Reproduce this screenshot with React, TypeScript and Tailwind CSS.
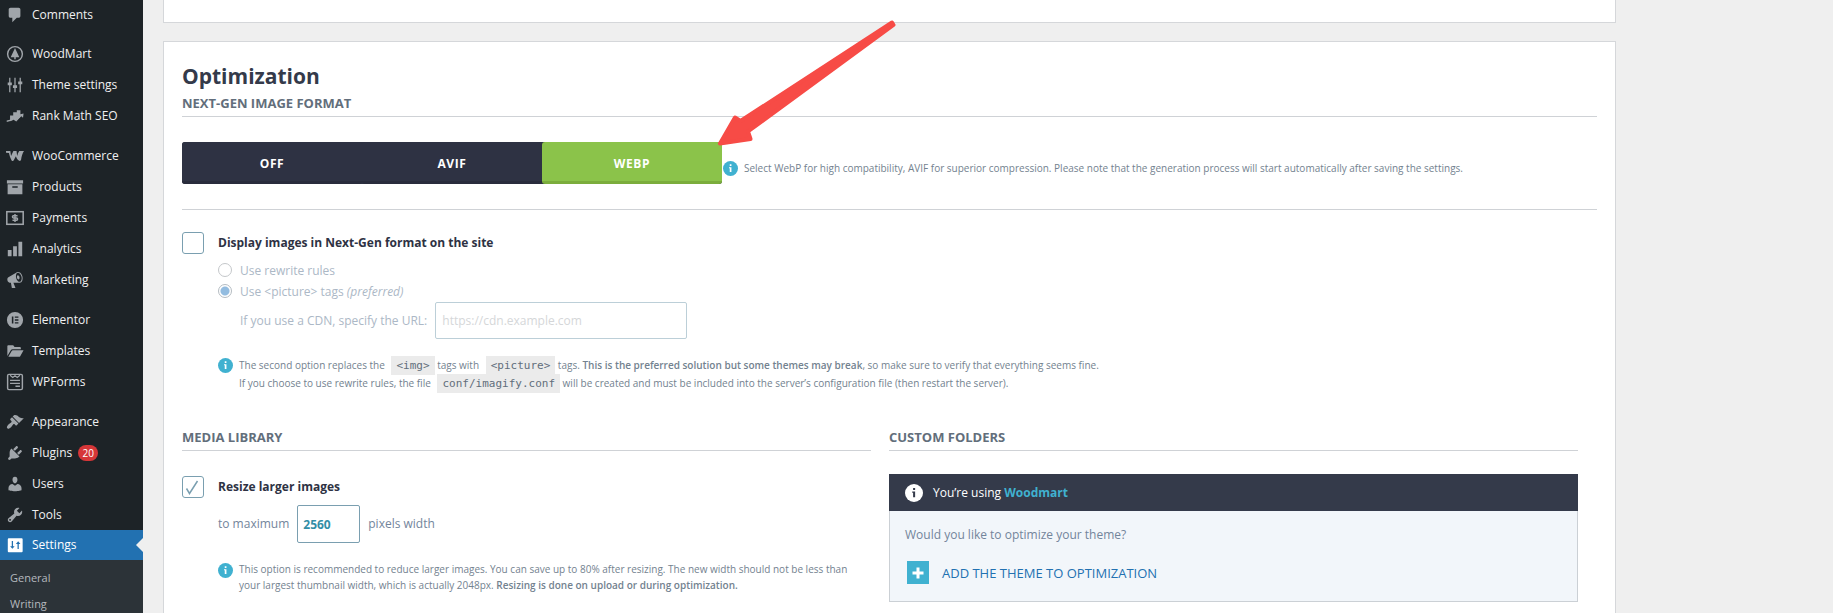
import type { ReactNode } from "react";
import clsx from "clsx";

const icons: Record<string, ReactNode> = {
  comments: <path d="M5 2h9c1.1 0 2 .9 2 2v7c0 1.1-.9 2-2 2h-2l-5 5v-5H5c-1.1 0-2-.9-2-2V4c0-1.1.9-2 2-2z" />,
  woodmart: (
    <>
      <circle cx="10" cy="10" r="8.2" fill="none" stroke="currentColor" strokeWidth="1.6" />
      <path d="M10 3.2l4.8 10.3h-4v2.3H9.2v-2.3h-4z" />
    </>
  ),
  theme: (
    <path d="M3.5 2h1.4v5.2h1.6v3H4.9V18H3.5v-7.800H1.900v-3h1.600zM9.300 2h1.400v8.200h1.600v3h-1.600V18H9.300v-4.800H7.700v-3h1.600zM15.100 2h1.400v4.200h1.600v3h-1.600V18h-1.400V9.200h-1.600v-3h1.600z" />
  ),
  rankmath: (
    <>
      <path d="M4.500 9.500h3.500v5l-3.500 1.300zM8 5.800h4v8.200l-1 .7-3-1.200zM12 3.500h4v7.500l-4 3.500z" />
      <path d="M.8 15.800c2.800-.2 5-1 7.200-2.700l3.300 2.100 6-6.500" fill="none" stroke="currentColor" strokeWidth="1.500" />
      <path d="M14.800 8.200l4.700-1-.6 4.800z" />
    </>
  ),
  woo: (
    <path d="M0 4.500h4.800L5.600 10l2.600-5.500h3.500l.7 5.400c.5-2 1.200-3.800 2.300-5.400H20c-1.700 2.600-2.800 5.800-3.200 9.500-.2 1.500-1.500 2-2.600 1.100-1.500-1.300-2.600-3-3.200-4.900-.9 1.500-1.600 3-2.200 4.300-.7 1.300-1.900 1.500-2.700.1C4.600 12 3.800 9.500 3.300 6.800L0 6.500z" />
  ),
  products: (
    <path fillRule="evenodd" d="M1 2.500h18V6H1zM1.800 7h16.400v11H1.800zM7 9.200v1.600h6V9.200z" />
  ),
  payments: (
    <>
      <rect x=".9" y="3" width="18.200" height="14" fill="none" stroke="currentColor" strokeWidth="1.700" />
      <path d="M12.800 7.500H8.200c-1.400 0-1.400 2.400 0 2.400h3.600c1.400 0 1.400 2.600 0 2.600H7.200M10 5.500v9" fill="none" stroke="currentColor" strokeWidth="1.600" />
    </>
  ),
  analytics: <path d="M2 11h4.200v7H2zM7.900 7h4.200v11H7.900zM13.800 2H18v16h-4.200z" />,
  marketing: (
    <path d="M18.150 5.940c.46 1.620.38 3.220-.02 4.480-.42 1.280-1.260 2.180-2.300 2.480-.16.06-.26.06-.4.06-.06.02-.12.02-.18.02-.06.02-.14.02-.22.02h-6.800l2.220 5.500c.02.14-.06.26-.14.34-.08.1-.24.16-.34.16H6.950c-.1 0-.26-.06-.34-.16-.08-.08-.16-.2-.14-.34l-1-5.500H4.250l-.02-.02c-.5.06-1.080-.18-1.540-.62s-.88-1.080-1.060-1.880c-.24-.8-.2-1.560-.02-2.200.18-.62.58-1.080 1.060-1.300l.02-.02 9-5.400c.1-.06.18-.1.24-.16.06-.04.14-.08.24-.12.16-.08.28-.12.5-.18 1.040-.3 2.240.1 3.220.98s1.840 2.240 2.260 3.860zm-2.580 5.980h-.02c.4-.1.74-.34 1.040-.7.58-.7.86-1.760.86-3.040 0-.64-.1-1.300-.28-1.980-.34-1.360-1.020-2.500-1.780-3.240s-1.680-1.100-2.460-.88c-.82.22-1.400.96-1.700 2-.32 1.040-.28 2.360.06 3.720.38 1.360 1 2.500 1.800 3.240.78.74 1.620 1.100 2.480.88zm-2.540-7.080c.22-.04.42-.02.62.04.38.16.76.48 1.020 1s.42 1.200.42 1.780c0 .3-.04.56-.12.8-.18.48-.44.84-.86.94-.34.1-.8-.06-1.140-.4s-.64-.86-.78-1.500c-.18-.62-.12-1.240.02-1.720s.48-.84.82-.94z" />
  ),
  elementor: (
    <path fillRule="evenodd" d="M10 1a9 9 0 100 18 9 9 0 000-18zM6.500 6h1.700v8H6.500zM9.800 6h4v1.600h-4zM9.800 9.200h4v1.600h-4zM9.800 12.400h4V14h-4z" />
  ),
  templates: (
    <path d="M1.500 15.500V4.500c0-.6.4-1 1-1H8l1.500 2h6c.6 0 1 .4 1 1V8H7.300c-.9 0-1.600.4-2 1.200zM2.600 16.500L6.300 10c.3-.6.7-.9 1.300-.9h11.900l-3.700 6.600c-.3.5-.7.8-1.300.8z" />
  ),
  wpforms: (
    <>
      <rect x="1.800" y="1.500" width="16.400" height="17" rx="1.500" fill="none" stroke="currentColor" strokeWidth="1.600" />
      <path d="M4.500 2.500l3 2.500L10 3l2.500 2 3-2.500" fill="none" stroke="currentColor" strokeWidth="1.300" />
      <path d="M4.500 7.500h11V9h-11zM4.500 10.700h11v1.500h-11zM10.500 14h5v1.600h-5z" />
    </>
  ),
  appearance: (
    <path d="M14.480 11.060L7.410 3.990l1.500-1.500c.5-.56 2.300-.47 3.510.32 1.210.8 1.430 1.280 2.910 2.100 1.180.64 2.450 1.260 4.450.85zm-.71.71L6.700 4.700 4.930 6.470c-.39.39-.39 1.020 0 1.410l1.060 1.060c.39.39.39 1.030 0 1.420-.6.6-1.430 1.110-2.210 1.690-.35.26-.7.53-1.010.84C1.430 14.230.4 16.080 1.400 17.070c.99 1 2.840-.03 4.180-1.360.31-.31.58-.66.85-1.020.57-.78 1.080-1.610 1.690-2.210.39-.39 1.020-.39 1.410 0l1.060 1.060c.39.39 1.020.39 1.410 0z" />
  ),
  plugins: (
    <path d="M13.110 4.360L9.870 7.600 8 5.730l3.240-3.240c.35-.34 1.050-.2 1.560.32.52.51.66 1.210.31 1.550zm-8 1.770l.91-1.120 9.010 9.010-1.190.84c-.71.71-2.630 1.160-3.820 1.160H6.140L4.900 17.260c-.59.59-1.540.59-2.120 0-.59-.58-.59-1.530 0-2.120l1.240-1.240v-3.880c0-1.130.4-3.190 1.090-3.890zm7.260 3.970l3.240-3.240c.34-.35 1.040-.21 1.550.31.52.51.66 1.210.31 1.550l-3.240 3.250z" />
  ),
  users: (
    <path d="M10 9.250c-2.270 0-2.730-3.440-2.730-3.440C7 4.020 7.820 2 9.970 2c2.160 0 2.980 2.020 2.710 3.810 0 0-.41 3.440-2.680 3.440zm0 2.570L12.720 10c2.390 0 4.520 2.330 4.520 4.530v2.490s-3.650 1.130-7.240 1.130c-3.650 0-7.240-1.130-7.240-1.130v-2.490c0-2.250 1.940-4.480 4.470-4.480z" />
  ),
  tools: (
    <path d="M16.680 9.770c-1.340 1.340-3.300 1.670-4.950.99l-5.410 6.520c-.99.99-2.590.99-3.580 0s-.99-2.590 0-3.570l6.520-5.420c-.68-1.650-.35-3.610.99-4.950 1.280-1.280 3.120-1.620 4.720-1.060l-2.890 2.890 2.820 2.820 2.860-2.870c.53 1.580.18 3.390-1.080 4.650zM3.810 16.210c.4.39 1.040.39 1.430 0 .4-.4.4-1.040 0-1.430-.39-.4-1.030-.4-1.430 0-.39.39-.39 1.030 0 1.430z" />
  ),
  settings: (
    <path fillRule="evenodd" d="M3 2.500h14.500c.6 0 1 .4 1 1v13.500c0 .6-.4 1-1 1H3c-.6 0-1-.4-1-1V3.500c0-.6.4-1 1-1zM6.400 5.500v5.800H4.600l2.500 3 2.500-3H7.800V5.500zM12.800 14.500V8.800H11l2.500-3 2.500 3h-1.800v5.700z" />
  ),
};

type MenuItem = { label: string; icon: string; badge?: string };

const menuGroups: MenuItem[][] = [
  [
    { label: "WoodMart", icon: "woodmart" },
    { label: "Theme settings", icon: "theme" },
    { label: "Rank Math SEO", icon: "rankmath" },
  ],
  [
    { label: "WooCommerce", icon: "woo" },
    { label: "Products", icon: "products" },
    { label: "Payments", icon: "payments" },
    { label: "Analytics", icon: "analytics" },
    { label: "Marketing", icon: "marketing" },
  ],
  [
    { label: "Elementor", icon: "elementor" },
    { label: "Templates", icon: "templates" },
    { label: "WPForms", icon: "wpforms" },
  ],
  [
    { label: "Appearance", icon: "appearance" },
    { label: "Plugins", icon: "plugins", badge: "20" },
    { label: "Users", icon: "users" },
    { label: "Tools", icon: "tools" },
  ],
];

const MenuIcon = ({ name }: { name: string }) => (
  <svg viewBox="0 0 20 20" className="h-[18px] w-[18px] shrink-0" fill="currentColor" aria-hidden="true">
    {icons[name]}
  </svg>
);

const MenuLink = ({ item }: { item: MenuItem }) => (
  <a href="#" className="flex h-[31px] items-center gap-2 pl-1.5 text-[#a0a5aa]">
    <MenuIcon name={item.icon} />
    <span className="text-[#f0f0f1]">{item.label}</span>
    {item.badge && (
      <span className="-ml-0.5 flex h-4 w-5 items-center justify-center rounded-full bg-[#d63638] text-[10px] text-white">
        {item.badge}
      </span>
    )}
  </a>
);

const Sidebar = () => (
  <nav className="flex w-[143px] shrink-0 flex-col gap-[9px] bg-[#1d2327] text-xs leading-5">
    <a href="#" className="flex h-[29px] shrink-0 items-center gap-2 pl-1.5 text-[#a0a5aa]">
      <MenuIcon name="comments" />
      <span className="text-[#f0f0f1]">Comments</span>
    </a>
    {menuGroups.map((group, index) => (
      <div key={index}>
        {group.map((item) => (
          <MenuLink key={item.label} item={item} />
        ))}
        {index === menuGroups.length - 1 && (
          <>
            <a href="#" className="relative flex h-[30px] items-center gap-2 bg-[#2271b1] pl-1.5 text-white">
              <MenuIcon name="settings" />
              <span>Settings</span>
              <svg viewBox="0 0 7 14" className="absolute right-0 h-3.5 w-[7px]" aria-hidden="true">
                <path d="M7 0v14L0 7z" fill="#efefef" />
              </svg>
            </a>
            <div className="bg-[#2c3338] pt-[5px] text-[11px] text-[#b4b9be]">
              <a href="#" className="flex h-[26px] items-center pl-2.5">General</a>
              <a href="#" className="flex h-[26px] items-center pl-2.5">Writing</a>
            </div>
          </>
        )}
      </div>
    ))}
  </nav>
);

const InfoIcon = ({ className }: { className?: string }) => (
  <svg viewBox="0 0 16 16" className={clsx("shrink-0", className)} aria-hidden="true">
    <circle cx="8" cy="8" r="8" fill="currentColor" />
    <path d="M7.200 3.500h1.800v1.800H7.200zM6.400 6.600H9v5.200H7.200V7.800h-.8z" className="fill-(--dot)" />
  </svg>
);

const Note = ({ children, className }: { children: ReactNode; className?: string }) => (
  <div className={clsx("flex gap-1.5 text-[10px] text-[#73828f]", className)}>
    <InfoIcon className="mt-0.5 h-[15px] w-[15px] text-[#40b1d0] [--dot:#fff]" />
    <p>{children}</p>
  </div>
);

const Code = ({ children }: { children: ReactNode }) => (
  <code className="ml-1 bg-[#ebebeb] px-[5px] py-[3px] font-['DejaVu_Sans_Mono',monospace] text-[11px] leading-none text-[#626e7b]">
    {children}
  </code>
);

const SectionTitle = ({ children }: { children: ReactNode }) => (
  <h3 className="border-b border-[#cfd2d6] pb-[3px] text-[13px] leading-5 font-bold text-[#626e7b] uppercase">
    {children}
  </h3>
);

const Checkbox = ({ id, label, checked }: { id: string; label: string; checked?: boolean }) => (
  <div className="flex items-center gap-3.5">
    <div className="grid h-[22px] w-[22px]">
      <input
        id={id}
        type="checkbox"
        defaultChecked={checked}
        className="peer col-start-1 row-start-1 appearance-none rounded-[3px] border border-[#7a9fb0] bg-white"
      />
      <svg
        viewBox="0 0 22 22"
        className="pointer-events-none col-start-1 row-start-1 hidden peer-checked:block"
        fill="none"
        stroke="#7a9fb0"
        aria-hidden="true"
      >
        <path d="M4.500 12.500l3 5L15.500 5" strokeWidth="1.500" />
      </svg>
    </div>
    <label htmlFor={id} className="text-xs leading-[22px] font-bold text-[#2e3243]">
      {label}
    </label>
  </div>
);

const formats = ["OFF", "AVIF", "WEBP"];

const FormatToggle = () => (
  <div role="radiogroup" aria-label="Next-Gen image format" className="flex rounded-[3px] bg-[#2e3243]">
    {formats.map((format) => (
      <label
        key={format}
        className="relative flex h-[42px] w-[180px] items-center justify-center rounded-[3px] border-b-3 border-[#292c3c] bg-[#2e3243] pt-1 text-xs font-bold tracking-wider text-white has-checked:border-[#7bad3c] has-checked:bg-[#8bc34a]"
      >
        <input type="radio" name="format" defaultChecked={format === "WEBP"} className="sr-only" />
        {format}
      </label>
    ))}
  </div>
);

const radioClass =
  "mb-0.5 h-3.5 w-3.5 appearance-none rounded-full border border-[#c4c7ca] bg-white checked:border-[#b5bcc2] checked:bg-[radial-gradient(circle,#93bce0_0_4px,#fff_5px)]";

const DisplayOptions = () => (
  <div className="mt-1.5 ml-9 text-xs leading-5 text-[#acb8c6]">
    <div className="flex h-[21px] items-center gap-2">
      <input id="rewrite" type="radio" name="display" disabled className={radioClass} />
      <label htmlFor="rewrite">Use rewrite rules</label>
    </div>
    <div className="flex h-[21px] items-center gap-2">
      <input id="picture" type="radio" name="display" disabled defaultChecked className={radioClass} />
      <label htmlFor="picture">
        Use &lt;picture&gt; tags <em>(preferred)</em>
      </label>
    </div>
    <div className="ml-[22px] flex items-center gap-2">
      <label htmlFor="cdn">If you use a CDN, specify the URL:</label>
      <input
        id="cdn"
        type="text"
        disabled
        placeholder="https://cdn.example.com"
        className="h-[37px] w-[252px] rounded-[2px] border border-[#bccfd8] bg-white px-1.5 placeholder:text-[#d5d7d9]"
      />
    </div>
  </div>
);

const MediaLibrary = () => (
  <section>
    <SectionTitle>Media Library</SectionTitle>
    <div className="mt-[25px]">
      <Checkbox id="resize" label="Resize larger images" checked />
      <div className="mt-[7px] ml-9 flex items-center gap-2 text-xs text-[#73859b]">
        <label htmlFor="max-width">to maximum</label>
        <input
          id="max-width"
          type="text"
          defaultValue="2560"
          className="h-[38px] w-[63px] rounded-[2px] border border-[#7a9fb0] bg-white px-[5px] font-bold text-[#338ea6]"
        />
        <span>pixels width</span>
      </div>
      <Note className="mt-[18px] ml-9 pr-3 leading-4">
        This option is recommended to reduce larger images. You can save up to 80% after resizing. The new width should
        not be less than your largest thumbnail width, which is actually 2048px.{" "}
        <strong className="font-semibold">Resizing is done on upload or during optimization.</strong>
      </Note>
    </div>
  </section>
);

const CustomFolders = () => (
  <section>
    <SectionTitle>Custom Folders</SectionTitle>
    <div className="mt-[23px] text-xs leading-5">
      <div className="flex h-[37px] items-center gap-2.5 bg-[#343a4a] pl-4 text-white">
        <InfoIcon className="h-[18px] w-[18px] [--dot:#343a4a]" />
        <p>
          You’re using <strong className="text-[#40b1d0]">Woodmart</strong>
        </p>
      </div>
      <div className="border border-t-0 border-[#cbd0d5] bg-[#f2f6fa] px-[15px] pt-3.5 pb-[17px]">
        <p className="text-[#73859b]">Would you like to optimize your theme?</p>
        <button
          type="button"
          className="mt-4 ml-0.5 flex items-center gap-[13px] text-[13px] font-medium text-[#2271b1]"
        >
          <span className="grid h-[23px] w-[22px] place-items-center bg-[#40b1d0]">
            <svg viewBox="0 0 12 12" className="h-3 w-3" aria-hidden="true">
              <path d="M6 .5v11M.5 6h11" stroke="#fff" strokeWidth="3" />
            </svg>
          </span>
          ADD THE THEME TO OPTIMIZATION
        </button>
      </div>
    </div>
  </section>
);

const Arrow = () => (
  <svg
    viewBox="712 18 190 132"
    className="pointer-events-none absolute -top-6 left-[548px] h-[132px] w-[190px]"
    aria-hidden="true"
  >
    <path
      d="M892 22.500L740.500 121L735 117.500L720 143.500L750.500 139L748 131.500L893.500 25Z"
      fill="#f74b46"
      stroke="#f74b46"
      strokeWidth="4"
      strokeLinejoin="round"
    />
  </svg>
);

const App = () => {
  return (
    <div className="flex h-screen overflow-hidden bg-[#efefef] font-['Open_Sans','Noto_Sans',sans-serif]">
      <Sidebar />
      <main className="flex min-w-0 flex-1 flex-col gap-[18px] px-5">
        <div className="h-[23px] w-full max-w-[1453px] shrink-0 border border-t-0 border-[#d5d7da] bg-white" />
        <div className="relative w-full max-w-[1453px] flex-1 border border-b-0 border-[#d5d7da] bg-white px-[18px] pt-5">
          <h2 className="mb-[3px] text-[21px] leading-7 font-bold text-[#343a4a]">Optimization</h2>
          <SectionTitle>Next-Gen image format</SectionTitle>
          <div className="flex items-end gap-px border-b border-[#cfd2d6] py-[25px]">
            <FormatToggle />
            <Note className="pb-[7px] leading-[18px]">
              Select WebP for high compatibility, AVIF for superior compression. Please note that the generation process
              will start automatically after saving the settings.
            </Note>
          </div>
          <div className="mt-[22px]">
            <Checkbox id="display" label="Display images in Next-Gen format on the site" />
            <DisplayOptions />
            <Note className="mt-[17px] ml-9 leading-[18px]">
              The second option replaces the <Code>&lt;img&gt;</Code> tags with <Code>&lt;picture&gt;</Code> tags.{" "}
              <strong className="font-semibold">This is the preferred solution but some themes may break</strong>, so
              make sure to verify that everything seems fine.
              <br />
              If you choose to use rewrite rules, the file <Code>conf/imagify.conf</Code> will be created and must be
              included into the server’s configuration file (then restart the server).
            </Note>
          </div>
          <div className="mt-[35px] grid grid-cols-2 gap-[18px] pr-[19px]">
            <MediaLibrary />
            <CustomFolders />
          </div>
          <Arrow />
        </div>
      </main>
    </div>
  );
};

export default App;
